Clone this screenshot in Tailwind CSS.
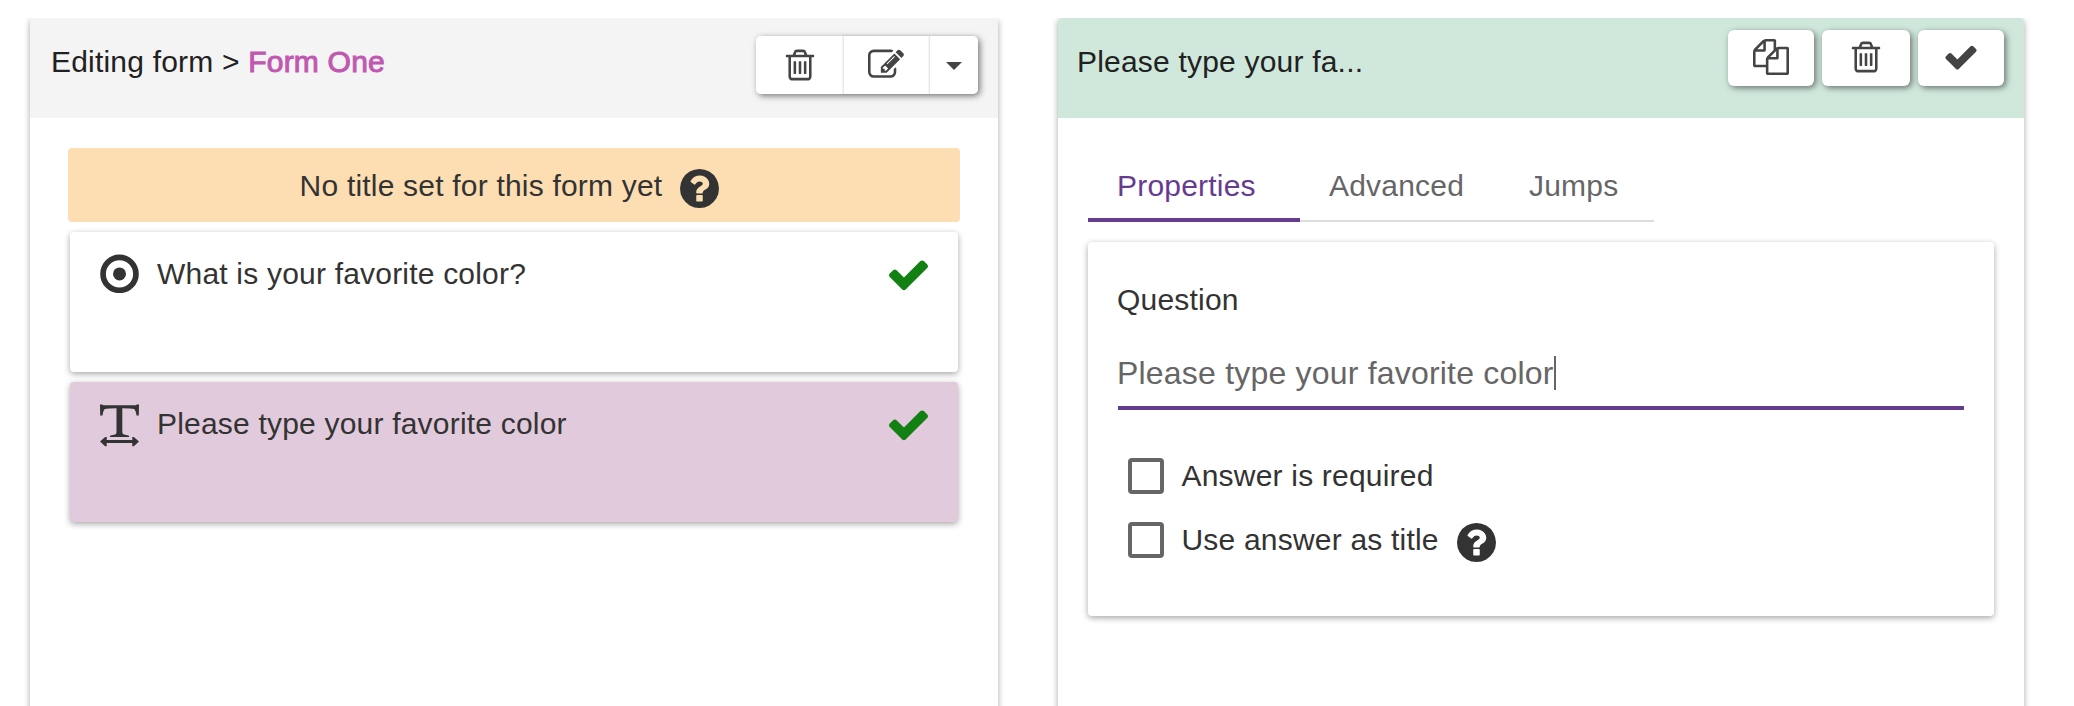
<!DOCTYPE html>
<html lang="en">
<head>
<meta charset="utf-8">
<title>Form editor</title>
<script src="https://cdn.jsdelivr.net/npm/@tailwindcss/browser@4"></script>
</head>
<body class="h-[706px] overflow-hidden bg-white font-['Liberation_Sans',Arial,sans-serif] text-[30px] leading-[36px] tracking-[0.2px] text-[#333]">
<svg class="hidden">
  <symbol id="trash" viewBox="0 0 1792 1792"><path d="M704 736v576q0 14-9 23t-23 9h-64q-14 0-23-9t-9-23v-576q0-14 9-23t23-9h64q14 0 23 9t9 23zm256 0v576q0 14-9 23t-23 9h-64q-14 0-23-9t-9-23v-576q0-14 9-23t23-9h64q14 0 23 9t9 23zm256 0v576q0 14-9 23t-23 9h-64q-14 0-23-9t-9-23v-576q0-14 9-23t23-9h64q14 0 23 9t9 23zm128 724v-948h-896v948q0 22 7 40.5t14.5 27 10.5 8.5h832q3 0 10.5-8.5t14.5-27 7-40.5zm-672-1076h448l-48-117q-7-9-17-11h-317q-10 2-17 11zm928 32v64q0 14-9 23t-23 9h-96v948q0 83-47 143.5t-113 60.5h-832q-66 0-113-58.5t-47-141.5v-952h-96q-14 0-23-9t-9-23v-64q0-14 9-23t23-9h309l70-167q15-37 54-63t79-26h320q40 0 79 26t54 63l70 167h309q14 0 23 9t9 23z"/></symbol>
  <symbol id="edit" viewBox="0 0 1792 1792"><path d="M888 1184l116-116-152-152-116 116v56h96v96h56zm440-720q-16-16-33 1l-350 350q-17 17-1 33t33-1l350-350q17-17 1-33zm80 594v190q0 119-84.5 203.5t-203.5 84.5h-832q-119 0-203.5-84.5t-84.5-203.5v-832q0-119 84.5-203.5t203.5-84.5h832q63 0 117 25 15 7 18 23 3 17-9 29l-49 49q-14 14-32 8-23-6-45-6h-832q-66 0-113 47t-47 113v832q0 66 47 113t113 47h832q66 0 113-47t47-113v-126q0-13 9-22l64-64q15-15 35-7t20 29zm-96-738l288 288-672 672h-288v-288zm444 132l-92 92-288-288 92-92q28-28 68-28t68 28l152 152q28 28 28 68t-28 68z"/></symbol>
  <symbol id="copy" viewBox="0 0 1792 1792"><path d="M1696 384q40 0 68 28t28 68v1216q0 40-28 68t-68 28h-960q-40 0-68-28t-28-68v-288h-544q-40 0-68-28t-28-68v-672q0-40 20-88t48-76l408-408q28-28 76-48t88-20h416q40 0 68 28t28 68v328q68-40 128-40h416zm-544 213l-299 299h299v-299zm-640-384l-299 299h299v-299zm196 647l316-316v-416h-384v416q0 40-28 68t-68 28h-416v640h512v-256q0-40 20-88t48-76zm956 804v-1152h-384v416q0 40-28 68t-68 28h-416v640h896z"/></symbol>
  <symbol id="check" viewBox="0 0 1792 1792"><path d="M1671 566q0 40-28 68l-724 724-136 136q-28 28-68 28t-68-28l-136-136-362-362q-28-28-28-68t28-68l136-136q28-28 68-28t68 28l294 295 656-657q28-28 68-28t68 28l136 136q28 28 28 68z"/></symbol>
  <symbol id="help" viewBox="128 128 1536 1536"><path d="M1024 1376v-192q0-14-9-23t-23-9h-192q-14 0-23 9t-9 23v192q0 14 9 23t23 9h192q14 0 23-9t9-23zm256-672q0-88-55.500-163t-138.500-116-170-41q-243 0-371 213-15 24 8 42l132 100q7 6 19 6 16 0 25-12 53-68 86-92 34-24 86-24 48 0 85.500 26t37.500 59q0 38-20 61t-68 45q-63 28-115.500 86.500t-52.500 125.500v36q0 14 9 23t23 9h192q14 0 23-9t9-23q0-19 21.500-49.500t54.500-49.500q32-18 49-28.500t46-35 44.500-48 28-60.500 12.500-81zm384 192q0 209-103 385.500t-279.500 279.500-385.500 103-385.500-103-279.500-279.500-103-385.500 103-385.500 279.500-279.500 385.500-103 385.500 103 279.500 279.500 103 385.500z"/></symbol>
</svg>
<div class="h-[706px] overflow-hidden pt-[18px]">
<div class="flex h-[688px] gap-[60px] overflow-hidden pl-[30px]">
  <section class="h-[720px] w-[968px] shrink-0 rounded-[4px] bg-white shadow-[0_2px_6px_rgba(0,0,0,0.35)]">
    <header class="flex h-[100px] justify-between bg-[#f4f4f4] pr-5 pl-[21px] text-[#212121]">
      <h1 class="pt-[26px]">Editing form &gt; <span class="text-[#c158b0] [-webkit-text-stroke:1px_#c158b0]">Form One</span></h1>
      <div class="mt-[18px] flex h-[58px] rounded-[5px] text-[#444] shadow-[2px_2px_6px_rgba(0,0,0,0.5)]">
        <button class="flex w-[88px] justify-center rounded-l-[5px] bg-white pt-[11px]"><svg class="size-9 fill-current"><use href="#trash"/></svg></button>
        <button class="flex w-[86px] bg-white pt-[11px] pl-6 shadow-[-1px_0_2px_rgba(0,0,0,0.14)]"><svg class="size-9 fill-current"><use href="#edit"/></svg></button>
        <button class="flex w-12 justify-center rounded-r-[5px] bg-white pt-[26px] shadow-[-1px_0_2px_rgba(0,0,0,0.14)]"><svg class="h-2 w-4 fill-current" viewBox="0 0 16 8"><path d="M0 0H16L8 8Z"/></svg></button>
      </div>
    </header>
    <div class="flex flex-col px-[38px] pt-[30px]">
      <div class="flex h-[74px] justify-center gap-[18px] rounded-[4px] bg-[#fddeb2] pt-5 pr-[9px]">
        <p>No title set for this form yet</p><svg class="mt-px size-[39px] fill-current"><use href="#help"/></svg>
      </div>
      <div class="mx-0.5 mt-[10px] flex h-[140px] rounded-[4px] bg-white pt-[22px] pr-[27px] pl-[30px] shadow-[0_2px_6px_rgba(0,0,0,0.35)]">
        <svg class="size-[39px]" viewBox="0 0 39 39" fill="none"><circle cx="19.500" cy="19.900" r="16.450" stroke="#333" stroke-width="5.700"/><circle cx="19.500" cy="19.900" r="6.500" fill="#333"/></svg>
        <p class="ml-[18px] flex-1 pt-0.5">What is your favorite color?</p>
        <svg class="-mt-[2.500px] size-[45px] fill-[#128012]"><use href="#check"/></svg>
      </div>
      <div class="mx-0.5 mt-[10px] flex h-[140px] rounded-[4px] bg-[#e1cadb] pt-[22px] pr-[27px] pl-[30px] shadow-[0_2px_6px_rgba(0,0,0,0.35)]">
        <svg class="h-[43px] w-[39px] fill-[#333]" viewBox="0 0 39 43"><path d="M0 .5H2L3.500 1.200H35.500L37 .5H39L38.800 11.500H36.500Q35.800 6 34 5Q31 4.300 22.300 4.300V28Q22.300 30 24 30.500L28.500 31.500Q29.500 32 29 33H10Q9.500 32 10.500 31.500L15 30.500Q16.500 30 16.500 28V4.300Q8 4.300 5 5Q3.200 6 2.500 11.500H.2ZM0 37.500L5.200 32.900H6.700V36H32.300V32.900H33.800L39 37.500L33.800 42.200H32.300V39.100H6.700V42.200H5.200Z"/></svg>
        <p class="ml-[18px] flex-1 pt-0.5">Please type your favorite color</p>
        <svg class="-mt-[2.500px] size-[45px] fill-[#128012]"><use href="#check"/></svg>
      </div>
    </div>
  </section>
  <section class="h-[720px] w-[966px] shrink-0 rounded-[4px] bg-white shadow-[0_2px_6px_rgba(0,0,0,0.35)]">
    <header class="flex h-[100px] justify-between rounded-t-[4px] bg-[#d0e8dc] pr-5 pl-[19px] text-[#212121]">
      <h2 class="pt-[26px]">Please type your fa...</h2>
      <div class="mt-3 flex h-14 gap-2 text-[#444]">
        <button class="flex w-[86px] justify-center rounded-[6px] bg-white pt-[9px] shadow-[2px_2px_6px_rgba(0,0,0,0.5)]"><svg class="size-9 fill-current"><use href="#copy"/></svg></button>
        <button class="flex w-[88px] justify-center rounded-[6px] bg-white pt-[9px] shadow-[2px_2px_6px_rgba(0,0,0,0.5)]"><svg class="size-9 fill-current"><use href="#trash"/></svg></button>
        <button class="flex w-[86px] justify-center rounded-[6px] bg-white pt-[9px] shadow-[2px_2px_6px_rgba(0,0,0,0.5)]"><svg class="size-9 fill-current"><use href="#check"/></svg></button>
      </div>
    </header>
    <div class="px-[30px] pt-[50px]">
      <nav class="flex h-[54px] w-[566px] text-[#666]">
        <a class="w-[212px] border-b-4 border-[#663c90] pl-[29px] text-[#663c90]">Properties</a>
        <a class="w-[200px] border-b-2 border-[#ddd] pl-[29px]">Advanced</a>
        <a class="flex-1 border-b-2 border-[#ddd] pl-[29px]">Jumps</a>
      </nav>
      <div class="mt-5 h-[374px] rounded-[4px] bg-white px-[30px] pt-10 shadow-[0_2px_6px_rgba(0,0,0,0.35)]">
        <label class="-ml-px block">Question</label>
        <div class="mt-[38px] flex h-[54px] border-b-4 border-[#663c90] text-[32px] text-[#666]"><span class="-mt-px -ml-px">Please type your favorite color</span><i class="h-[34px] w-0.5 bg-[#666]"></i></div>
        <div class="mt-12 ml-[10px] flex h-9"><span class="size-9 rounded-[4px] border-4 border-[#666]"></span><span class="ml-[17.500px]">Answer is required</span></div>
        <div class="mt-7 ml-[10px] flex h-9"><span class="size-9 rounded-[4px] border-4 border-[#666]"></span><span class="ml-[17.500px]">Use answer as title</span><svg class="mt-px ml-[18px] size-[39px] fill-current"><use href="#help"/></svg></div>
      </div>
    </div>
  </section>
</div>
</div>
</body>
</html>
